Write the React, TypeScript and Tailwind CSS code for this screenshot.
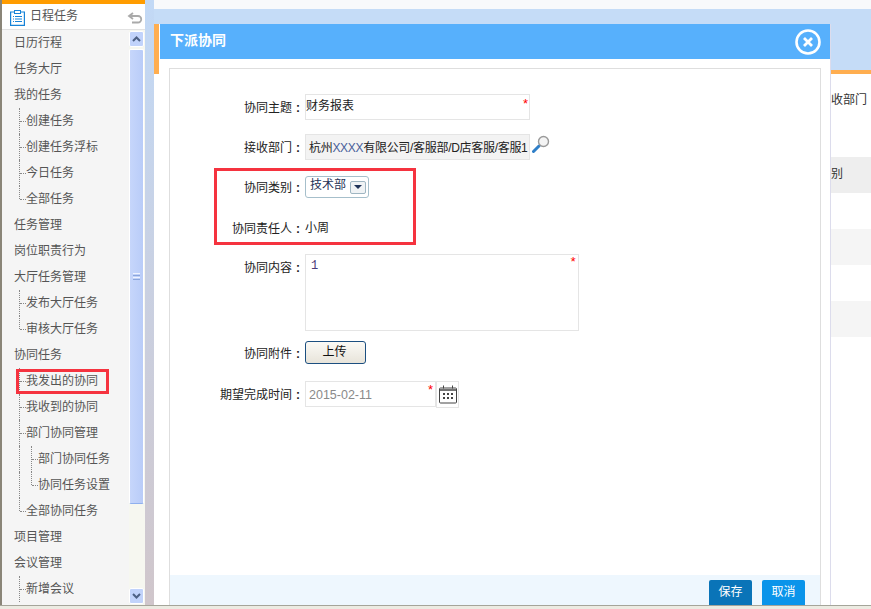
const FONT = "font-['Liberation_Sans','Noto_Sans_CJK_SC',sans-serif]";

const menu: { text: string; level: number; last?: boolean; boxed?: boolean }[] = [
  { text: "日历行程", level: 0 },
  { text: "任务大厅", level: 0 },
  { text: "我的任务", level: 0 },
  { text: "创建任务", level: 1 },
  { text: "创建任务浮标", level: 1 },
  { text: "今日任务", level: 1 },
  { text: "全部任务", level: 1, last: true },
  { text: "任务管理", level: 0 },
  { text: "岗位职责行为", level: 0 },
  { text: "大厅任务管理", level: 0 },
  { text: "发布大厅任务", level: 1 },
  { text: "审核大厅任务", level: 1, last: true },
  { text: "协同任务", level: 0 },
  { text: "我发出的协同", level: 1, boxed: true },
  { text: "我收到的协同", level: 1 },
  { text: "部门协同管理", level: 1 },
  { text: "部门协同任务", level: 2 },
  { text: "协同任务设置", level: 2, last: true },
  { text: "全部协同任务", level: 1, last: true },
  { text: "项目管理", level: 0 },
  { text: "会议管理", level: 0 },
  { text: "新增会议", level: 1 },
];

function MenuRow({ item }: { item: (typeof menu)[number] }) {
  if (item.level === 0) {
    return <div className="h-[26px] pl-[12px] leading-[26px] text-[#555]">{item.text}</div>;
  }
  const nested = item.level === 2;
  return (
    <div className={`relative h-[26px] leading-[26px] text-[#555] ${nested ? "pl-[36px]" : "pl-[24px]"}`}>
      {/* dotted tree lines */}
      {(nested || (item.level === 1 && !item.last)) && (
        <span className="absolute left-[17px] top-0 h-[26px] border-l border-dotted border-[#888]" />
      )}
      {item.level === 1 && item.last && (
        <span className="absolute left-[17px] top-0 h-[13px] border-l border-dotted border-[#888]" />
      )}
      {nested && (
        <span
          className={`absolute left-[29px] top-0 border-l border-dotted border-[#888] ${item.last ? "h-[13px]" : "h-[26px]"}`}
        />
      )}
      <span
        className={`absolute top-[13px] w-[6px] border-t border-dotted border-[#888] ${nested ? "left-[30px]" : "left-[18px]"}`}
      />
      {item.text}
      {item.boxed && <span className="absolute left-[14px] top-[1px] h-[25px] w-[93px] border-[3px] border-[#f5333f]" />}
    </div>
  );
}

function Scrollbar() {
  return (
    <div className="flex w-[16px] shrink-0 flex-col bg-[#f6f7f0]">
      <div className="mr-[1px] mt-[1px] flex h-[16px] items-center justify-center rounded-[2px] border border-white bg-[#c1d3fb]">
        <svg width="9" height="6" viewBox="0 0 9 6">
          <path d="M1 5 L4.5 1.5 L8 5" fill="none" stroke="#4d6185" strokeWidth="2" />
        </svg>
      </div>
      <div className="mr-[1px] mt-[2px] flex h-[455px] items-center justify-center rounded-[2px] border border-white border-b-[#8fb0ee] bg-gradient-to-r from-[#c6d6fb] to-[#b9ccf8]">
        <div className="flex w-[7px] flex-col gap-[1px]">
          <div className="h-[1px] bg-[#eef3ff]" />
          <div className="h-[1px] bg-[#8ba6dc]" />
          <div className="h-[1px] bg-[#eef3ff]" />
          <div className="h-[1px] bg-[#8ba6dc]" />
        </div>
      </div>
      <div className="flex-1" />
      <div className="mb-[1px] mr-[1px] flex h-[16px] items-center justify-center rounded-[2px] border border-white bg-[#c1d3fb]">
        <svg width="9" height="6" viewBox="0 0 9 6">
          <path d="M1 1 L4.5 4.5 L8 1" fill="none" stroke="#4d6185" strokeWidth="2" />
        </svg>
      </div>
    </div>
  );
}

function Sidebar() {
  return (
    <aside className="flex h-[605px] w-[145px] shrink-0 flex-col border-l-2 border-[#8a8578] bg-white">
      <div className="h-[4px] bg-[#ff9c00]" />
      <div className="flex h-[26px] items-start border-b border-[#e2e2e2] pl-[8px] text-[#555]">
        <svg width="15" height="16" viewBox="0 0 15 16" className="mr-[5px] mt-[6px]">
          <path d="M4 2H0.6V15.4H14.4V2H11" fill="#fff" stroke="#1783d8" strokeWidth="1.2" />
          <rect x="4.5" y="0.5" width="6" height="3" fill="#fff" stroke="#1783d8" />
          <path d="M3 6.5h1M5 6.5h7M3 9h1M5 9h7M3 11.5h1M5 11.5h7" stroke="#1783d8" strokeWidth="1" />
        </svg>
        <span className="mt-[3px] leading-[18px]">日程任务</span>
        <svg width="16" height="12" viewBox="0 0 16 12" className="ml-auto mr-[2px] mt-[8px]">
          <path d="M6 1 L2 4 L6 7 M2 4 H11 A3 3 0 0 1 11 10.5 H5" fill="none" stroke="#aaa" strokeWidth="1.8" />
        </svg>
      </div>
      <div className="flex min-h-0 flex-1 bg-[#f5f5f5]">
        <div className="min-w-0 flex-1 overflow-hidden">
          {menu.map((item) => (
            <MenuRow key={item.text} item={item} />
          ))}
        </div>
        <Scrollbar />
      </div>
    </aside>
  );
}

function Star({ className }: { className: string }) {
  return <span className={`absolute text-[13px] leading-none text-[#f00] ${className}`}>*</span>;
}

function Label({ children }: { children: string }) {
  return (
    <div className="flex w-[89px] shrink-0 justify-end whitespace-nowrap pt-[1px] text-[#222]">
      {children}
      <span className="w-[12px] pl-[4px] font-bold">:</span>
    </div>
  );
}

function CalendarIcon() {
  return (
    <svg width="18" height="19" viewBox="0 0 18 19">
      <rect x="0.5" y="3" width="17" height="15" rx="1" fill="#fff" stroke="#444" />
      <path d="M0.5 5h17" stroke="#444" strokeWidth="1.5" />
      <path d="M4.5 0.5v3M13.5 0.5v3" stroke="#444" />
      <path d="M4 9h2M8 9h2M12 9h2M4 13h2M8 13h2M12 13h2" stroke="#444" strokeWidth="2" />
    </svg>
  );
}

function MagnifierIcon() {
  return (
    <svg width="18" height="18" viewBox="0 0 18 18" className="-mt-[7px]">
      <path d="M1.5 16.5 L7 11" stroke="#2f7fc8" strokeWidth="3" strokeLinecap="round" />
      <circle cx="11.5" cy="6.5" r="5" fill="#f4f4f4" stroke="#9a9a9a" strokeWidth="1.4" />
    </svg>
  );
}

function Modal() {
  return (
    <div className="absolute left-[154px] top-[24px] flex h-[581px] w-[677px]">
      <div className="h-[49px] w-[5px] shrink-0 bg-[#ffae50]" />
      <div className="flex min-w-0 flex-1 flex-col border-x border-[#dcdcec] border-l-white bg-white">
        <div className="flex h-[35px] shrink-0 items-center justify-between bg-[#57b0fc] pl-[10px] pr-[9px]">
          <span className="-mt-[2px] text-[14px] font-bold text-white">下派协同</span>
          <svg width="26" height="26" viewBox="0 0 26 26">
            <circle cx="13" cy="13" r="11.5" fill="none" stroke="#fff" strokeWidth="2.6" />
            <path d="M9 9l8 8M17 9l-8 8" stroke="#fff" strokeWidth="2.8" />
          </svg>
        </div>
        <div className="ml-[9px] mr-[9px] mt-[9px] flex min-h-0 flex-1 flex-col border-x border-t border-[#dedede]">
          <div className="flex-1 pl-[45px] pt-[25px]">
            <div className="flex h-[26px] items-center">
              <Label>协同主题</Label>
              <div className="relative -mt-[1px] ml-[1px] h-[26px] w-[225px] border border-[#e5e5e5] leading-[22px] text-[#222]">
                财务报表
                <Star className="right-[1px] top-[2px]" />
              </div>
            </div>
            <div className="mt-[14px] flex h-[26px] items-center">
              <Label>接收部门</Label>
              <div className="ml-[1px] h-[26px] w-[225px] overflow-hidden whitespace-nowrap border border-[#e5e5e5] bg-[#f3f3f3] pl-[3px] leading-[26px] tracking-[-0.3px] text-[#222]">
                杭州<span className="text-[#4a5f9a]">XXXX</span>有限公司/客服部/D店客服/客服1
              </div>
              <div className="ml-[2px]">
                <MagnifierIcon />
              </div>
            </div>
            <div className="mt-[16px] flex h-[22px] items-center">
              <Label>协同类别</Label>
              <div className="ml-[1px] flex h-[22px] w-[64px] items-center rounded-[3px] border border-[#a6bfcb] pl-[4px] text-[#1f3358]">
                <span className="-mt-[5px]">技术部</span>
                <span className="ml-[4px] flex h-[13px] w-[16px] items-center justify-center rounded-[2px] border border-[#9fb6c2] bg-[#f0f3f5]">
                  <span className="h-0 w-0 border-x-[4px] border-t-[4px] border-x-transparent border-t-[#1f3358]" />
                </span>
              </div>
            </div>
            <div className="mt-[19px] flex h-[22px] items-center">
              <Label>协同责任人</Label>
              <span className="ml-[1px] text-[#222]">小周</span>
            </div>
            <div className="mt-[15px] flex">
              <div className="pt-[4px]">
                <Label>协同内容</Label>
              </div>
              <div className="relative ml-[1px] h-[77px] w-[274px] border border-[#e5e5e5] pl-[5px] pt-[2px] font-['Liberation_Mono',monospace] text-[#4a3a78]">
                1
                <Star className="right-[1px] top-[1px]" />
              </div>
            </div>
            <div className="mt-[10px] flex h-[23px] items-center">
              <div className="pt-[2px]">
                <Label>协同附件</Label>
              </div>
              <button className="ml-[1px] h-[23px] w-[61px] rounded-[3px] border border-[#1c4f80] bg-gradient-to-b from-[#fbfaf6] to-[#e8e4da] pb-[1px] pr-[2px] text-[#111]">
                上传
              </button>
            </div>
            <div className="mt-[17px] flex h-[26px] items-center">
              <Label>期望完成时间</Label>
              <div className="relative ml-[1px] h-[26px] w-[131px] border border-[#e5e5e5] pl-[3px] pt-[1px] text-[12.5px] leading-[24px] text-[#8a8a8a]">
                2015-02-11
                <Star className="right-[2px] top-[1px]" />
              </div>
              <div className="flex h-[27px] w-[23px] items-center justify-center border border-[#e5e5e5]">
                <CalendarIcon />
              </div>
            </div>
          </div>
          <div className="flex h-[30px] shrink-0 items-end justify-end gap-[10px] bg-[#eef7fe] pr-[15px]">
            <button className="h-[25px] w-[43px] rounded-t-[2px] bg-[#0a74b8] pb-[2px] text-white">保存</button>
            <button className="h-[25px] w-[43px] rounded-t-[2px] bg-[#0a94ea] pb-[2px] text-white">取消</button>
          </div>
        </div>
      </div>
      {/* red annotation drawn over the form */}
      <div className="absolute left-[60px] top-[144px] h-[77px] w-[202px] border-[3px] border-[#f5333f]" />
    </div>
  );
}

export default function App() {
  return (
    <div className={`${FONT} relative flex h-[609px] w-[871px] flex-col overflow-hidden bg-white text-[12px]`}>
      <div className="flex min-h-0 flex-1">
        <Sidebar />
        <div className="w-[9px] shrink-0 bg-gradient-to-b from-[#c2d9f6] to-[#d0c6cb]" />
        <div className="flex min-w-0 flex-1 flex-col bg-white">
          <div className="h-[9px] shrink-0 bg-[#f8f9fb]" />
          <div className="h-[61px] shrink-0 bg-[#c5dcf7]" />
          <div className="h-[4px] shrink-0 bg-[#ffae50]" />
          <div className="pl-[677px] pt-[17px] text-[#333]">
            <div className="h-[66px] whitespace-nowrap">收部门</div>
            <div className="h-[36px] whitespace-nowrap bg-[#eeeeee] leading-[34px]">别</div>
            <div className="h-[36px]" />
            <div className="h-[36px] bg-[#f5f5f5]" />
            <div className="h-[36px]" />
            <div className="h-[36px] bg-[#f5f5f5]" />
          </div>
        </div>
      </div>
      <div className="h-[4px] shrink-0 border-t border-[#a5a59a] bg-[#ecebe2]" />
      <Modal />
    </div>
  );
}
